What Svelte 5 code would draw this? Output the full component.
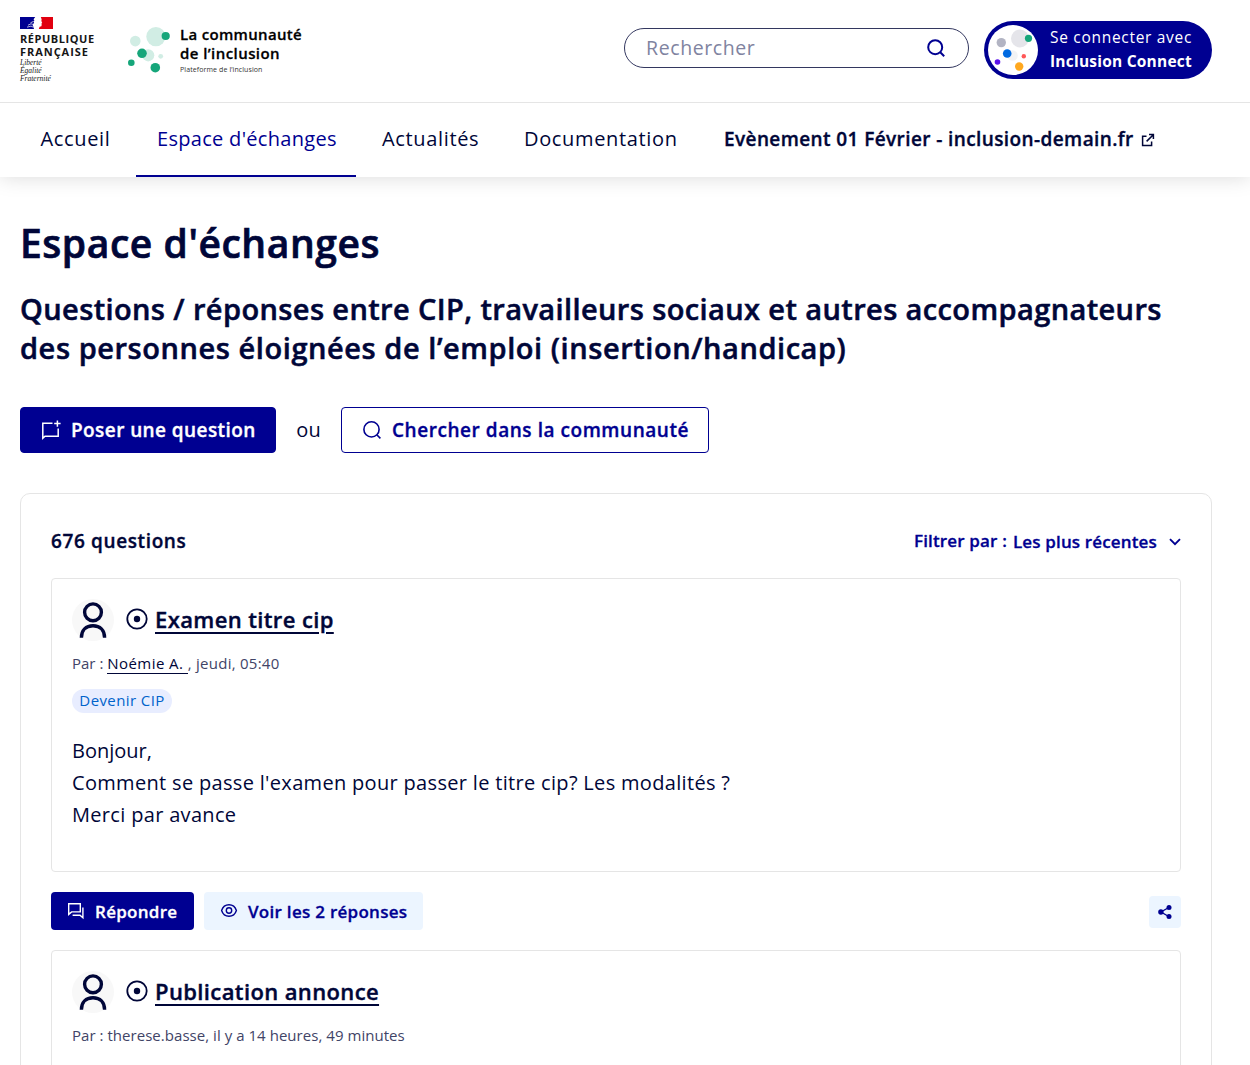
<script>
  const nav = [
    { label: 'Accueil', cls: 'accueil' },
    { label: "Espace d'échanges", cls: 'espace active' },
    { label: 'Actualités', cls: 'actus' },
    { label: 'Documentation', cls: 'docs' }
  ];
</script>

{#snippet avatar()}
  <svg class="avatar" viewBox="0 0 42 42" aria-hidden="true">
    <circle cx="21" cy="21" r="21" fill="#f8f8f8" />
    <g fill="none" stroke="#000638" stroke-width="3.4">
      <circle cx="21" cy="13.3" r="8.4" />
      <path d="M9.4 38.8C9.4 31 14 26.8 21 26.8s11.600 4.200 11.600 12" />
    </g>
  </svg>
  <svg class="dot" viewBox="0 0 22 22" aria-hidden="true">
    <circle cx="11" cy="11" r="9.7" fill="none" stroke="#000638" stroke-width="1.8" />
    <circle cx="11" cy="11" r="3.2" fill="#000638" />
  </svg>
{/snippet}

<header>
  <div class="top">
    <div class="rf">
      <svg class="flag" viewBox="0 0 33 12" aria-hidden="true">
        <path fill="#000091" d="M0 0h15.2l-1.600 2.300.8 1.500-1 .6.7 1-.9 1.700-.5 1.300.8 1.500L14 12H0z" />
        <path fill="#e1000f" d="M20.800 0H33v12H18.800l.8-2.200 1.800-.5.300-1.600-.3-1.200.8-.4-.8-2 .2-1.800z" />
        <path fill="none" stroke="#fff" stroke-width=".7" d="M7 10.200l4-1.100 2.500 1.200M8 8.200l3-1.400 2.800.9M10.500 5.800l3-1.400" />
      </svg>
      <strong class="rep">RÉPUBLIQUE</strong>
      <strong class="fra">FRANÇAISE</strong>
      <em>Liberté</em>
      <em>Égalité</em>
      <em>Fraternité</em>
    </div>
    <div class="brand">
      <svg viewBox="0 0 42 46" aria-hidden="true">
        <g fill="#d1ede4">
          <circle cx="7.3" cy="14.1" r="5.3" /><circle cx="27.9" cy="9.6" r="9.6" />
          <circle cx="20.2" cy="28.3" r="6.1" /><circle cx="32.7" cy="29.3" r="2.4" />
        </g>
        <g fill="#16a67a">
          <circle cx="37.7" cy="9" r="4.1" /><circle cx="14" cy="26.3" r="4.8" />
          <circle cx="3.3" cy="35.7" r="3.3" /><circle cx="27.3" cy="40.7" r="4.8" />
        </g>
      </svg>
      <div class="names">
        <b class="n1">La communauté</b>
        <b class="n2">de l’inclusion</b>
        <small>Plateforme de l’inclusion</small>
      </div>
    </div>
    <div class="search">
      <span>Rechercher</span>
      <svg viewBox="0 0 18 18" fill="none" stroke="#000091" stroke-width="2" aria-hidden="true">
        <circle cx="8.2" cy="8.2" r="7" /><path d="M13 13l4.2 4.2" />
      </svg>
    </div>
    <div class="connect">
      <svg viewBox="0 0 50 50" aria-hidden="true">
        <circle cx="25" cy="25" r="25" fill="#fff" />
        <circle cx="32" cy="13.5" r="9" fill="#e5e5ea" /><circle cx="24.5" cy="30.5" r="5.3" fill="#f2f3f5" />
        <circle cx="13.3" cy="17.6" r="4.7" fill="#b2b4c3" /><circle cx="40.5" cy="13.3" r="3.6" fill="#16a67a" />
        <circle cx="19.2" cy="28.5" r="4.3" fill="#006ae1" /><circle cx="35.8" cy="31.3" r="2.2" fill="#ff5757" />
        <circle cx="9.5" cy="37" r="2.8" fill="#5b12eb" /><circle cx="31.2" cy="41.5" r="4.2" fill="#ffa81f" />
      </svg>
      <div class="ctext">
        <span>Se connecter avec</span>
        <b>Inclusion Connect</b>
      </div>
    </div>
  </div>
  <nav>
    {#each nav as item}
      <span class="link {item.cls}">{item.label}</span>
    {/each}
    <span class="link event">
      <b>Evènement 01 Février - inclusion-demain.fr</b>
      <svg viewBox="0 0 14 14" fill="none" stroke="#000638" stroke-width="1.5" aria-hidden="true">
        <path d="M5.500 3.200H1.600v9.200h9V8.400M8 1.600h4.400V6M12.300 1.700L5.600 8.400" />
      </svg>
    </span>
  </nav>
</header>

<main>
  <h1>Espace d'échanges</h1>
  <h2>
    <span class="l1">Questions / réponses entre CIP, travailleurs sociaux et autres accompagnateurs</span>
    <span class="l2">des personnes éloignées de l’emploi (insertion/handicap)</span>
  </h2>
  <div class="actions">
    <div class="btn ask">
      <svg viewBox="0 0 20 20" fill="none" stroke="#fff" stroke-width="1.5" aria-hidden="true">
        <path d="M11.500 3.200H1.800v15L4 16.200h13.200V8.400M16.400 .4v6.400M13.200 3.600h6.400" />
      </svg>
      <b>Poser une question</b>
    </div>
    <span class="ou">ou</span>
    <div class="btn find">
      <svg viewBox="0 0 20 20" fill="none" stroke="#000091" stroke-width="1.6" aria-hidden="true">
        <circle cx="9.5" cy="9.4" r="7.6" /><path d="M15 15l3.4 3.4" />
      </svg>
      <b>Chercher dans la communauté</b>
    </div>
  </div>

  <section>
    <div class="bar">
      <b class="count">676 questions</b>
      <div class="filter">
        <b class="f1">Filtrer par :</b>
        <b class="f2">Les plus récentes</b>
        <svg viewBox="0 0 12 8" fill="none" stroke="#000091" stroke-width="1.9" aria-hidden="true"><path d="M1 1.2l5 5 5-5" /></svg>
      </div>
    </div>

    <article class="first">
      <div class="head">{@render avatar()}<h3 class="t1">Examen titre cip</h3></div>
      <p class="meta"><span class="par">Par :</span> <span class="who">Noémie A.&nbsp;</span><span class="when">, jeudi, 05:40</span></p>
      <div class="tag">Devenir CIP</div>
      <div class="body">
        <p class="b1">Bonjour,</p>
        <p class="b2">Comment se passe l'examen pour passer le titre cip? Les modalités ?</p>
        <p class="b3">Merci par avance</p>
      </div>
    </article>

    <div class="tools">
      <div class="small reply">
        <svg viewBox="0 0 18 18" fill="none" stroke="#fff" stroke-width="1.4" aria-hidden="true">
          <path d="M1.7 1.7h11.6v8.2H4.6l-2.9 2.5zM15.9 5.6v10.2L13 13.2H5.6" />
        </svg>
        <b>Répondre</b>
      </div>
      <div class="small view">
        <svg viewBox="0 0 18 18" fill="none" stroke="#000091" stroke-width="1.4" aria-hidden="true">
          <path d="M1.600 8.500C2.700 5.100 5.600 2.800 9 2.800S15.300 5.100 16.400 8.500C15.300 11.900 12.400 14.200 9 14.200S2.700 11.900 1.600 8.500z" /><circle cx="9" cy="8.500" r="2.700" />
        </svg>
        <b>Voir les 2 réponses</b>
      </div>
      <div class="share">
        <svg viewBox="0 0 14 14" aria-hidden="true">
          <path d="M10.800 2.500L3 7l7.800 4.500" fill="none" stroke="#000091" stroke-width="1.400" />
          <g fill="#000091"><circle cx="11" cy="2.500" r="2.500" /><circle cx="2.900" cy="7" r="2.700" /><circle cx="11" cy="11.500" r="2.500" /></g>
        </svg>
      </div>
    </div>

    <article class="second">
      <div class="head">{@render avatar()}<h3 class="t2">Publication annonce</h3></div>
      <p class="meta m2">Par : therese.basse, il y a 14 heures, 49 minutes</p>
    </article>
  </section>
</main>

<style>
  :global(body) {
    font-family: 'Open Sans', 'Noto Sans', sans-serif;
    color: #000638;
    background: #fff;
    overflow: hidden;
    height: 1065px;
  }
  :global(#app) { height: 1065px; overflow: hidden; }
  h1, h2, h3, p { margin: 0; }
  svg { display: block; flex: none; }
  span, b, strong, em, small, h1, h3, p { white-space: nowrap; }
  b, h1, h2, h3 { font-weight: 600; -webkit-text-stroke: .018em currentColor; }

  header { height: 177px; box-shadow: 0 0 20px rgba(0, 0, 0, .15); }
  .top { height: 102px; border-bottom: 1px solid #e5e5e5; display: flex; }

  .rf { width: 108px; padding: 17px 0 0 20px; box-sizing: border-box; display: flex; flex-direction: column; color: #161616; }
  .flag { width: 33px; height: 12px; margin-bottom: 4px; }
  .rf strong { font-size: 11px; line-height: 12.500px; font-weight: 700; letter-spacing: .55px; }
  .rf .fra { letter-spacing: .95px; }
  .rf em { font: italic 7.500px/8.200px 'Liberation Serif', serif; }
  .rf strong + em { margin-top: 1px; }
  .brand { display: flex; width: 516px; padding: 27px 0 0 20px; box-sizing: border-box; color: #000; }
  .brand svg { width: 42px; height: 46px; }
  .names { display: flex; flex-direction: column; padding: 0 0 0 10px; margin-top: -2px; }
  .names b { font-size: 15px; line-height: 19px; letter-spacing: .32px; }
  .names .n2 { letter-spacing: .43px; }
  .names small { font-size: 7px; line-height: 14px; color: #333; letter-spacing: .1px; }

  .search { width: 345px; height: 40px; margin-top: 28px; box-sizing: border-box; border: 1px solid #33375f; border-radius: 20px; display: flex; align-items: center; justify-content: space-between; padding: 0 23px 0 21px; }
  .search span { font-size: 19.500px; color: #8083a0; letter-spacing: .6px; margin-top: -1px; }
  .search svg { width: 18px; height: 18px; }
  .connect { width: 228px; height: 58px; margin: 21px 0 0 15px; border-radius: 29px; background: #000091; color: #fff; display: flex; align-items: center; padding-left: 4px; box-sizing: border-box; }
  .connect svg { width: 50px; height: 50px; }
  .ctext { margin: -2px 0 0 12px; display: flex; flex-direction: column; font-size: 15.500px; line-height: 24px; letter-spacing: .7px; }
  .ctext b { font-weight: 700; letter-spacing: .22px; -webkit-text-stroke: 0; }

  nav { display: flex; height: 74px; padding-left: 20px; }
  .link { display: flex; align-items: center; box-sizing: border-box; height: 74px; padding: 0 0 4px 21px; font-size: 20px; letter-spacing: .3px; }
  .accueil { width: 116px; padding-left: 20.500px; }
  .espace { width: 220px; }
  .actus { width: 142px; margin-left: 5px; }
  .docs { width: 194px; }
  .accueil, .actus, .docs { letter-spacing: .65px; }
  .espace, .find b, .filter, .view { color: #000091; }
  .active { border-bottom: 2px solid #000091; padding-bottom: 2px; }
  .event { margin-left: 6px; padding-bottom: 3px; font-size: 19px; gap: 7px; letter-spacing: .4px; }
  .event svg { width: 14px; height: 14px; margin-top: 3px; }

  main { padding: 0 38px 0 20px; }
  h1 { font-size: 39px; line-height: 52px; padding-top: 40px; letter-spacing: .56px; }
  h2 { font-size: 29px; line-height: 39px; padding-top: 20px; display: flex; flex-direction: column; letter-spacing: .39px; }
  .l2 { letter-spacing: .56px; }
  .actions { display: flex; align-items: center; margin-top: 40px; height: 46px; font-size: 19px; }
  .ask b { letter-spacing: .42px; }
  .find b { letter-spacing: .55px; }
  .btn { display: flex; align-items: center; height: 46px; box-sizing: border-box; border: 1px solid #000091; border-radius: 4px; padding-left: 20px; gap: 10px; }
  .btn svg { width: 20px; height: 20px; }
  .ask { width: 256px; background: #000091; color: #fff; }
  .ou { width: 65px; text-align: center; font-size: 20px; margin-top: -2px; }
  .find { width: 368px; }

  section { margin-top: 40px; height: 700px; border: 1px solid #e5e5e5; border-radius: 10px; padding: 0 30px; }
  .bar { height: 84px; display: flex; align-items: center; justify-content: space-between; }
  .count { font-size: 19px; padding-top: 10px; letter-spacing: .62px; }
  .filter { display: flex; align-items: center; font-size: 17px; padding-top: 8px; letter-spacing: .15px; }
  .f2 { margin-left: 6px; padding-top: 2px; }
  .filter svg { width: 12px; height: 8px; margin: 4px 0 0 12px; }

  article { border: 1px solid #e5e5e5; border-radius: 4px; padding: 20px; box-sizing: border-box; }
  .first { height: 294px; }
  .second { height: 300px; }
  .head { display: flex; align-items: center; height: 42px; }
  .avatar { width: 42px; height: 42px; }
  .dot { width: 22px; height: 22px; margin: -2px 7.500px 0 11.500px; }
  h3 { font-size: 22px; line-height: 30px; margin-top: -2px; text-decoration: underline; text-decoration-thickness: 2px; text-underline-offset: 4px; letter-spacing: .38px; }
  .meta { font-size: 15px; line-height: 24px; margin-top: 10px; color: #414467; }
  .m2 { letter-spacing: .04px; }
  .who { color: #000638; border-bottom: 1px solid #000638; letter-spacing: .45px; }
  .when { letter-spacing: .25px; }
  .tag { width: 100px; height: 24px; margin-top: 14px; border-radius: 12px; background: #e8edff; color: #0063cb; font-size: 15px; line-height: 23px; text-align: center; letter-spacing: .4px; }
  .body { margin-top: 22px; font-size: 20px; line-height: 32px; letter-spacing: .32px; }
  .body p { width: max-content; }
  .b1 { letter-spacing: 0; }

  .tools { display: flex; align-items: center; gap: 10px; margin: 20px 0; height: 38px; }
  .small { height: 38px; border-radius: 4px; display: flex; align-items: center; gap: 10px; font-size: 17px; box-sizing: border-box; padding-left: 16px; letter-spacing: .28px; }
  .small svg { width: 18px; height: 18px; }
  .reply { width: 143px; background: #000091; color: #fff; }
  .view { width: 219px; background: #ecf5ff; }
  .share { margin: 2px 0 0 auto; width: 32px; height: 32px; border-radius: 4px; background: #ecf5ff; display: flex; align-items: center; justify-content: center; }
  .share svg { width: 14px; height: 14px; }
</style>
